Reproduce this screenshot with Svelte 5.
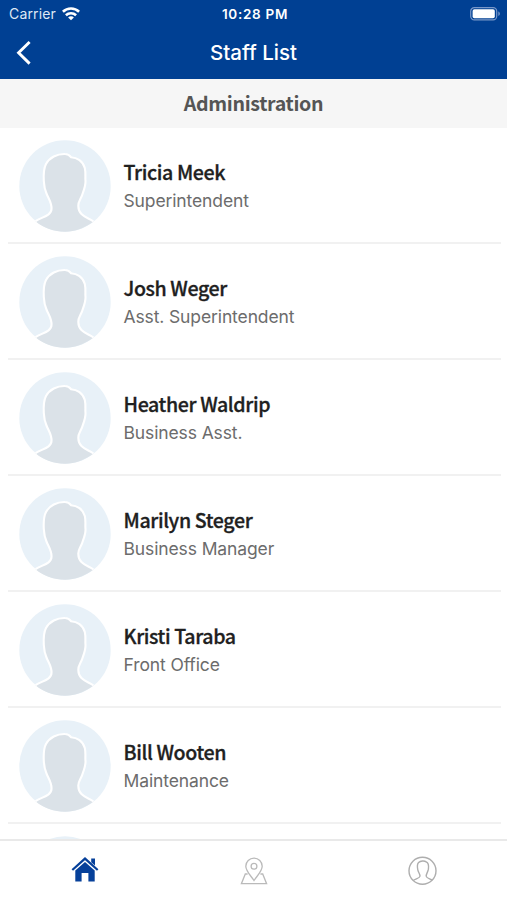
<script>
	const PAGE_TITLE = 'Staff List';
	const SECTION_TITLE = 'Administration';

	const staff = [
		{ name: 'Tricia Meek', role: 'Superintendent' },
		{ name: 'Josh Weger', role: 'Asst. Superintendent' },
		{ name: 'Heather Waldrip', role: 'Business Asst.' },
		{ name: 'Marilyn Steger', role: 'Business Manager' },
		{ name: 'Kristi Taraba', role: 'Front Office' },
		{ name: 'Bill Wooten', role: 'Maintenance' },
		{ name: '', role: '' }
	];
</script>

<div class="screen">
	<header>
		<div class="status">
			<div class="carrier">
				<span>Carrier</span>
				<svg width="18" height="14" viewBox="0 0 18 14" fill="none" stroke="#fff" stroke-width="2.6">
					<path d="M0.9 4.7C5.4 0.4 12.6 0.4 17.1 4.7" />
					<path d="M3.9 8.2C6.8 5.5 11.2 5.5 14.1 8.2" />
					<path d="M9 13.3L6.1 10.4C7.7 8.9 10.3 8.9 11.9 10.4Z" fill="#fff" stroke="none" />
				</svg>
			</div>
			<div class="clock">10:28 PM</div>
			<svg class="battery" width="31" height="14" viewBox="0 0 31 14">
				<rect x="0.7" y="0.7" width="26" height="12.2" rx="3.6" fill="none" stroke="#7897c8" stroke-width="1.2" />
				<rect x="2.6" y="2.3" width="22.2" height="9" rx="1.8" fill="#fff" />
				<path d="M28.3 4.5C30.4 5.2 30.4 8.2 28.3 8.9Z" fill="#7897c8" />
			</svg>
		</div>
		<div class="navbar">
			<button class="back" aria-label="Back">
				<svg width="16" height="26" viewBox="0 0 16 26" fill="none" stroke="#fff" stroke-width="2.9">
					<path d="M14.6 2L3.6 12.8L14.6 23.6" />
				</svg>
			</button>
			<h1>{PAGE_TITLE}</h1>
		</div>
	</header>

	<h2>{SECTION_TITLE}</h2>

	<main>
		{#each staff as person}
			<div class="row">
				<svg class="avatar" width="92" height="92" viewBox="0 0 92 92">
					<circle cx="46" cy="46" r="45.7" fill="#e8f1f8" />
					<path
						d="M16.5 81.2C23 77 32.5 75.5 32.5 69C33 63 29.5 58.5 27.5 53.5C25.5 49 25 45 24.8 41C24.5 35 24.3 29 27 24C30.5 17.5 38 13.8 46 14C49 14 50.5 15 52 17.2C58 17.5 64 21 65.8 28C67 33 66 38 66.5 41C66.8 46 64.5 51 62.8 56C61 60 59 62 59.3 66C59.5 76 68 77 74.5 81.5C66 88 56 91.7 46 91.7C35 91.7 24.5 88 16.5 81.2Z"
						fill="#dbe2e8"
					/>
					<path
						d="M16.5 81.2C23 77 32.5 75.5 32.5 69C33 63 29.5 58.5 27.5 53.5C25.5 49 25 45 24.8 41C24.5 35 24.3 29 27 24C30.5 17.5 38 13.8 46 14C49 14 50.5 15 52 17.2C58 17.5 64 21 65.8 28C67 33 66 38 66.5 41C66.8 46 64.5 51 62.8 56C61 60 59 62 59.3 66C59.5 76 68 77 74.5 81.5"
						fill="none"
						stroke="#fff"
						stroke-width="2.1"
					/>
				</svg>
				<div class="info">
					<div class="name">{person.name}</div>
					<div class="role">{person.role}</div>
				</div>
			</div>
		{/each}
	</main>

	<nav>
		<button aria-label="Home">
			<svg width="28" height="28" viewBox="0 0 28 28" fill="#06409a">
				<path d="M20.2 2.6H24V9.6L20.2 6.2Z" />
				<path d="M1.3 14L14 2.6L26.7 14" fill="none" stroke="#06409a" stroke-width="2.2" />
				<path d="M4.3 14.6L14 5.9L23.7 14.6V25.6H17.4V17H10.6V25.6H4.3Z" />
			</svg>
		</button>
		<button aria-label="Map">
			<svg width="28" height="30" viewBox="0 0 28 30" fill="none" stroke="#bababa" stroke-width="1.3">
				<path d="M14 24.5C11 20 5.8 15.2 5.8 10.3A8.2 8.2 0 0 1 22.2 10.3C22.2 15.2 17 20 14 24.5Z" />
				<circle cx="14" cy="10.3" r="2.9" />
				<path d="M7.6 18H5.3L1.4 27.7H26.6L22.7 18H20.4" />
			</svg>
		</button>
		<button aria-label="Profile">
			<svg width="30" height="30" viewBox="0 0 30 30" fill="none" stroke="#aeaeae" stroke-width="1.4">
				<circle cx="14.5" cy="14.7" r="13.5" />
				<path d="M5.2 24.5C7.5 22.8 11.8 22.3 12 20.3C12.2 18 10.4 16.7 9.8 13.8C9.2 11 8.9 8.4 10.6 6.6C12.5 4.7 16.4 4.6 18.2 5.9C20.6 7 20.8 10.4 20.4 13.2C19.8 16.5 18 18 18.2 20.3C18.4 22.3 22.5 22.8 24.3 24.3" />
			</svg>
		</button>
	</nav>
</div>

<style>
	:global(body) {
		margin: 0;
		background: #fff;
	}

	.screen {
		display: flex;
		flex-direction: column;
		height: 900px;
		overflow: hidden;
		font-family: Inter, 'Liberation Sans', sans-serif;
	}

	header {
		flex: none;
		height: 79px;
		background: #004093;
		color: #fff;
	}

	.status {
		display: grid;
		grid-template-columns: 1fr auto 1fr;
		align-items: center;
		height: 27px;
		padding: 0 6px 0 9px;
	}

	.carrier {
		display: flex;
		align-items: center;
		gap: 6px;
		font-size: 14px;
		letter-spacing: 0.15px;
		color: #dfe8f5;
	}

	.clock {
		font-size: 13.5px;
		font-weight: 600;
		letter-spacing: 0.7px;
	}

	.battery {
		justify-self: end;
	}

	.navbar {
		display: grid;
		grid-template-columns: 60px 1fr 60px;
		align-items: center;
		height: 50px;
	}

	button {
		display: flex;
		padding: 0;
		border: 0;
		background: none;
	}

	.back {
		padding-left: 15px;
	}

	h1 {
		margin: 0;
		font-size: 20.5px;
		font-weight: 500;
		line-height: 51px;
		text-align: center;
	}

	h2 {
		flex: none;
		height: 49px;
		margin: 0;
		background: #f6f6f6;
		color: #555;
		font-family: 'Noto Sans CJK SC', sans-serif;
		font-size: 19.6px;
		font-weight: 700;
		letter-spacing: -0.35px;
		line-height: 47px;
		text-align: center;
	}

	main {
		flex: 1;
		min-height: 0;
		padding: 0 6px 0 8px;
		overflow: hidden;
	}

	.row {
		display: flex;
		box-sizing: border-box;
		height: 116px;
		padding: 12px 0 0 11px;
		border-bottom: 2px solid #f1f1f1;
	}

	.avatar {
		flex: none;
	}

	.info {
		padding: 18px 0 0 12.5px;
	}

	.name {
		height: 30px;
		color: #202020;
		font-family: 'Noto Sans CJK SC', sans-serif;
		font-size: 19.6px;
		font-weight: 500;
		letter-spacing: -0.38px;
		line-height: 27px;
		-webkit-text-stroke: 0.3px #202020;
	}

	.role {
		color: #6c6c6c;
		font-size: 17.5px;
		letter-spacing: -0.12px;
		line-height: 26px;
	}

	nav {
		display: grid;
		flex: none;
		grid-template-columns: repeat(3, 1fr);
		align-items: start;
		justify-items: center;
		box-sizing: border-box;
		height: 61px;
		padding-top: 15px;
		border-top: 2px solid #e9e9e9;
		background: #fff;
	}
</style>
